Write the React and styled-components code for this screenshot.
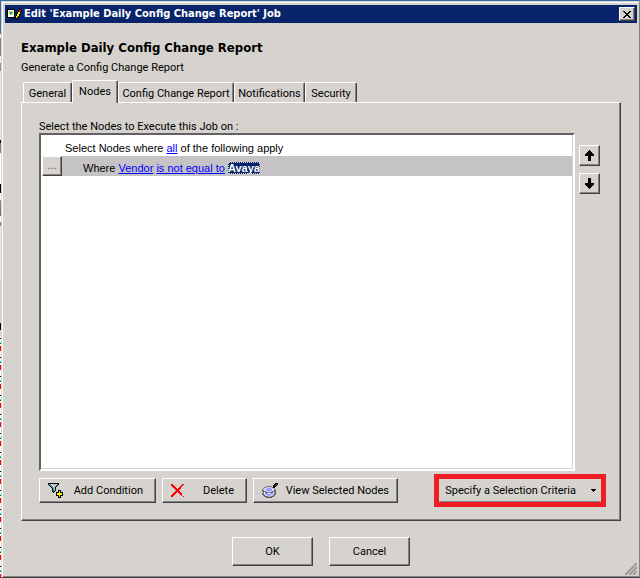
import React from 'react';
import styled, { createGlobalStyle, css } from 'styled-components';

const GlobalStyle = createGlobalStyle`
  * {
    box-sizing: border-box;
  }
  body {
    margin: 0;
    background: #d6d3ce;
    color: #000;
    font: 11px/14px Roboto, 'Liberation Sans', sans-serif;
  }
`;

const raised = css`
  border: 1px solid;
  border-color: #fff #424142 #424142 #fff;
  box-shadow: inset -1px -1px 0 #848284;
`;

const Desktop = styled.div`
  display: flex;
  min-height: 100vh;
  border-top: 1px solid #3a6ea5;
`;

// sliver of the application that stays visible beside the dialog
const Behind = styled.div`
  width: 1px;
  background:
    linear-gradient(
      #3a6ea5 33px, #efefef 33px, #efefef 37px, #848284 37px, #848284 55px,
      #efefef 55px, #efefef 62px, #949294 62px, #949294 70px, #e7e3e7 70px,
      #e7e3e7 139px, #000 139px, #000 142px, #848284 142px, #848284 152px,
      #fff 152px, #fff 183px, #000 183px, #000 192px, #fff 192px, #fff 199px,
      #949294 199px, #6b6d6b 215px, #fff 215px, #fff 221px, #848284 221px,
      #848284 225px, #efe7e7 225px, #efe7e7 278px, #d6d3ce 278px,
      #d6d3ce 322px, #000 322px, #000 329px, #d6d3ce 329px
    ) 0 0 / 1px 335px no-repeat,
    repeating-linear-gradient(
      #fff 0, #fff 2px, #000 2px, #000 3px, #fff 3px, #fff 6px, #00ffff 6px,
      #00ffff 7px, #008200 7px, #008200 8px, #fff 8px, #fff 10px,
      #ff0000 10px, #ff0000 15px, #fff 15px, #fff 19px
    ) 0 335px;
`;

const Dialog = styled.div`
  flex: 1;
  min-width: 0;
  display: flex;
  flex-direction: column;
  padding: 3px 2px 2px 3px;
  background: #d6d3ce;
  border: 1px solid;
  border-color: #d6d3ce #848284 #424142 #d6d3ce;
  box-shadow: inset 1px 1px 0 #fff, inset 0 -1px 0 #848284;
`;

const TitleBar = styled.header`
  display: flex;
  align-items: center;
  gap: 1px;
  height: 18px;
  padding: 0 2px;
  background: #08246b;
  color: #fff;
`;

const TitleText = styled.div`
  flex: 1;
  font: bold 11px/18px 'DejaVu Sans Condensed', 'DejaVu Sans', sans-serif;
`;

const Button = styled.button`
  ${raised}
  display: flex;
  align-items: center;
  justify-content: center;
  height: 25px;
  padding: 0;
  background: #d6d3ce;
  color: #000;
  font: inherit;
  white-space: nowrap;
`;

const CloseButton = styled(Button)`
  width: 16px;
  height: 14px;
`;

const Body = styled.main`
  flex: 1;
  display: flex;
  flex-direction: column;
  padding: 17px 16px 9px;
`;

const Heading = styled.h1`
  margin: 0;
  font: bold 13px/16px 'DejaVu Sans Condensed', 'DejaVu Sans', sans-serif;
`;

const Description = styled.p`
  margin: 4px 0;
  line-height: 16px;
`;

const TabList = styled.div`
  display: flex;
  align-items: flex-end;
  height: 22px;
  padding-left: 2px;
`;

const Tab = styled.button`
  width: ${props => props.$width}px;
  height: 20px;
  padding: 2px 0 0;
  border: solid;
  border-width: 1px 1px 0;
  border-color: #fff #424142 #fff #fff;
  border-radius: 2px 2px 0 0;
  box-shadow: inset -1px 0 0 #848284;
  background: #d6d3ce;
  color: #000;
  font: inherit;
  white-space: nowrap;

  &[aria-selected='true'] {
    z-index: 1;
    height: 23px;
    margin-bottom: -1px;
    padding-bottom: 2px;
  }
`;

const Panel = styled.section`
  ${raised}
  flex: 1;
  display: flex;
  flex-direction: column;
  padding: 17px 14px 13px 17px;
`;

const PanelLabel = styled.div`
  line-height: 13px;
`;

const Editor = styled.div`
  flex: 1;
  display: flex;
  gap: 4px;
  padding-right: 6px;
`;

const ConditionList = styled.div`
  flex: 1;
  padding: 1px;
  background: #fff;
  border: 2px solid;
  border-color: #636163 #fff #fff #636163;
  box-shadow: inset -1px -1px 0 #d6d3ce;
  font: 11px/20px 'Liberation Sans', Arial, sans-serif;
`;

const Condition = styled.div`
  display: flex;
  align-items: center;
  height: 20px;
  padding-left: ${props => (props.$selected ? 0 : 23)}px;
  background: ${props => (props.$selected ? '#c6c3c6' : 'transparent')};
`;

const ConditionText = styled.div`
  padding: 4px 0 0 ${props => (props.$nested ? 21 : 0)}px;
`;

const MoreButton = styled(Button)`
  width: 20px;
  height: 20px;
  padding-bottom: 2px;
  color: #636163;
`;

const Term = styled.a`
  color: #0000ff;
  text-decoration: underline;
`;

const EditedTerm = styled(Term)`
  background: #08246b;
  color: #fff;
  font-weight: bold;
  text-decoration: none;
  outline: 1px dotted #d6d3ce;
  outline-offset: -1px;
`;

const MoveButtons = styled.div`
  display: flex;
  flex-direction: column;
  gap: 7px;
  padding-top: 12px;
`;

const MoveButton = styled(Button)`
  width: 21px;
  height: 21px;
`;

const Actions = styled.div`
  display: flex;
  align-items: center;
  gap: 6px;
  margin-top: 3px;
`;

const ActionButton = styled(Button)`
  justify-content: space-between;
  width: ${props => props.$width}px;
  padding: 0 ${props => props.$inset}px 0 8px;
`;

const Highlight = styled.div`
  margin-left: auto;
  border: 5px solid #ef1c24;
`;

const CriteriaButton = styled(Button)`
  width: 162px;
  height: 23px;
  gap: 15px;
  justify-content: flex-end;
  padding: 0 4px;
  border-color: #d6d3ce #d6d3ce #848284 #d6d3ce;
  box-shadow: none;
`;

const Footer = styled.footer`
  display: flex;
  justify-content: center;
  gap: 16px;
  padding-top: 16px;
`;

const DialogButton = styled(Button)`
  width: 81px;
  height: 29px;
`;

const GripRow = styled.div`
  display: flex;
  justify-content: flex-end;
  align-items: flex-end;
  height: 0;
`;

const palette = {
  k: '#000000',
  w: '#ffffff',
  y: '#ffff00',
  c: '#00c3c6',
  b: '#2459d6',
  g: '#848284',
  l: '#c6c3c6',
  r: '#ff0000',
  o: '#ffcf31',
  m: '#9c0000',
  v: '#9c9aff',
  i: '#c6cfff',
  n: '#52556b',
};

const PixelIcon = ({ rows }) => {
  const width = Math.max(...rows.map(row => row.length));
  return (
    <svg width={width} height={rows.length} shapeRendering="crispEdges" aria-hidden="true">
      {rows.map((row, y) =>
        [...row].map((code, x) =>
          palette[code] ? (
            <rect key={`${x}-${y}`} x={x} y={y} width="1" height="1" fill={palette[code]} />
          ) : null
        )
      )}
    </svg>
  );
};

const jobIcon = [
  'kkkkkkkk....kk..',
  'kwwwwwwk...krmk.',
  'kwcyyywk...kmrk.',
  'kwycbcwk..kyyk..',
  'kwybcywk..kyyk..',
  'kwycyywk.kyyk...',
  'kwwwwwwk.kyyk...',
  'kwwwwwwkkyyk....',
  'kkkkkkkkkokk....',
  '........kk......',
  '...k.k.k.k.k....',
];

const funnelIcon = [
  'kkkkkkkkkkk....',
  'kgcwlllllgk....',
  '.kgcwlllgk.....',
  '..kgcwlgk......',
  '...kgclk.......',
  '....kclk.......',
  '....kclk.......',
  '....kclk..kkk..',
  '....kkk...kyk..',
  '.....k..kkkykkk',
  '........kyyyyyk',
  '........kyyyyyk',
  '........kkkykkk',
  '..........kyk..',
  '..........kkk..',
];

const deleteIcon = [
  'rr.........rr',
  'rrr.......rr.',
  '.rrr.....rr..',
  '..rrr...rr...',
  '...rrr.rrr...',
  '....rrrrr....',
  '.....rrr.....',
  '....rrrrr....',
  '...rrr.rrr...',
  '..rrr...rrr..',
  '.rrr.....rr..',
  'rrr.......r..',
  'rr..........r',
];

const viewIcon = [
  '.............kkk',
  '............kknk',
  '...........kknk.',
  '....gggggg.kkk..',
  '..gglliiilgkk...',
  '.gliivvvviilg...',
  'gliwvvvvvvwilg..',
  'ngiivvvvvviign..',
  'gnggiiiiiiggng..',
  '.gwnnggggnnwgn..',
  'ngivvvwwvvvign..',
  'gniivvvvviilng..',
  '.gnliivviilng...',
  '..gnngllggnn....',
  '....nnnnnn......',
];

const closeIcon = [
  'kk....kk',
  '.kk..kk.',
  '..kkkk..',
  '...kk...',
  '..kkkk..',
  '.kk..kk.',
  'kk....kk',
];

const upIcon = [
  '....k....',
  '...kkk...',
  '..kkkkk..',
  '.kkkkkkk.',
  'kkkkkkkkk',
  'kkkkkkkkk',
  '...kkk...',
  '...kkk...',
  '...kkk...',
  '...kkk...',
  '...kkk...',
];

const downIcon = [...upIcon].reverse();
const dropIcon = ['kkkkk', '.kkk.', '..k..'];

const tabs = [
  { name: 'General', width: 49 },
  { name: 'Nodes', width: 46 },
  { name: 'Config Change Report', width: 116 },
  { name: 'Notifications', width: 71 },
  { name: 'Security', width: 52 },
];

export default function App() {
  return (
    <>
      <GlobalStyle />
      <Desktop>
        <Behind />
        <Dialog role="dialog" aria-labelledby="dialog-title">
          <TitleBar>
            <PixelIcon rows={jobIcon} />
            <TitleText id="dialog-title">Edit 'Example Daily Config Change Report' Job</TitleText>
            <CloseButton aria-label="Close">
              <PixelIcon rows={closeIcon} />
            </CloseButton>
          </TitleBar>

          <Body>
            <Heading>Example Daily Config Change Report</Heading>
            <Description>Generate a Config Change Report</Description>

            <TabList role="tablist">
              {tabs.map(tab => (
                <Tab key={tab.name} role="tab" $width={tab.width} aria-selected={tab.name === 'Nodes'}>
                  {tab.name}
                </Tab>
              ))}
            </TabList>

            <Panel role="tabpanel">
              <PanelLabel id="nodes-label">Select the Nodes to Execute this Job on :</PanelLabel>
              <Editor>
                <ConditionList role="group" aria-labelledby="nodes-label">
                  <Condition>
                    <ConditionText>
                      Select Nodes where <Term href="#all">all</Term> of the following apply
                    </ConditionText>
                  </Condition>
                  <Condition $selected>
                    <MoreButton aria-label="Condition options">...</MoreButton>
                    <ConditionText $nested>
                      Where <Term href="#field">Vendor</Term> <Term href="#operator">is not equal to</Term>{' '}
                      <EditedTerm href="#value">Avaya</EditedTerm>
                    </ConditionText>
                  </Condition>
                </ConditionList>
                <MoveButtons>
                  <MoveButton aria-label="Move up">
                    <PixelIcon rows={upIcon} />
                  </MoveButton>
                  <MoveButton aria-label="Move down">
                    <PixelIcon rows={downIcon} />
                  </MoveButton>
                </MoveButtons>
              </Editor>

              <Actions>
                <ActionButton $width={117} $inset={12}>
                  <PixelIcon rows={funnelIcon} />
                  Add Condition
                </ActionButton>
                <ActionButton $width={85} $inset={12}>
                  <PixelIcon rows={deleteIcon} />
                  Delete
                </ActionButton>
                <ActionButton $width={145} $inset={8}>
                  <PixelIcon rows={viewIcon} />
                  View Selected Nodes
                </ActionButton>
                <Highlight>
                  <CriteriaButton aria-haspopup="menu">
                    Specify a Selection Criteria
                    <PixelIcon rows={dropIcon} />
                  </CriteriaButton>
                </Highlight>
              </Actions>
            </Panel>

            <Footer>
              <DialogButton>OK</DialogButton>
              <DialogButton>Cancel</DialogButton>
            </Footer>
          </Body>

          <GripRow>
            <svg width="12" height="12" stroke="#9c9a9c" strokeWidth="2" aria-hidden="true">
              <path d="M0 12L12 0M4 12L12 4M8 12L12 8" />
            </svg>
          </GripRow>
        </Dialog>
      </Desktop>
    </>
  );
}
